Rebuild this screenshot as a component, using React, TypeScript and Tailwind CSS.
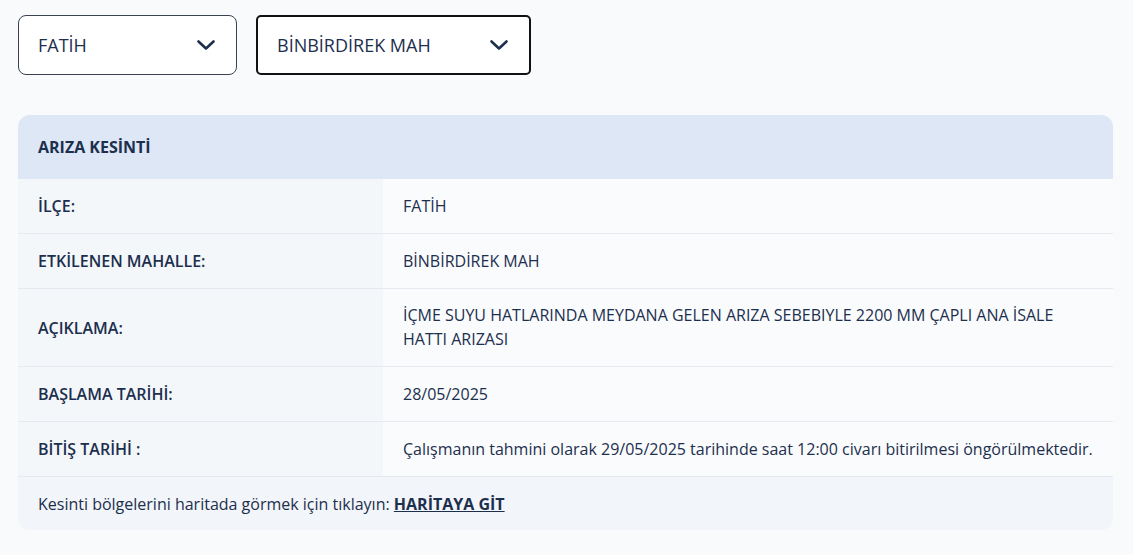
import React from "react";

interface Row {
    label: string;
    value: string;
}

const rows: Row[] = [
    { label: "İLÇE:", value: "FATİH" },
    { label: "ETKİLENEN MAHALLE:", value: "BİNBİRDİREK MAH" },
    {
        label: "AÇIKLAMA:",
        value: "İÇME SUYU HATLARINDA MEYDANA GELEN ARIZA SEBEBIYLE 2200 MM ÇAPLI ANA İSALE HATTI ARIZASI",
    },
    { label: "BAŞLAMA TARİHİ:", value: "28/05/2025" },
    {
        label: "BİTİŞ TARİHİ :",
        value: "Çalışmanın tahmini olarak 29/05/2025 tarihinde saat 12:00 civarı bitirilmesi öngörülmektedir.",
    },
];

function Chevron() {
    return (
        <svg className="w-[24px] h-[24px]" fill="none" stroke="currentColor" viewBox="0 0 24 24" aria-hidden="true">
            <path strokeLinecap="round" strokeLinejoin="round" strokeWidth="2.6" d="M4.5 8.5l7.5 7 7.5-7" />
        </svg>
    );
}

function Select({ value, width, focused }: { value: string; width: string; focused?: boolean }) {
    return (
        <div
            className={`${width} h-[60px] flex items-center justify-between bg-white pl-[19px] pr-[18px] ${focused ? "border-2 border-[#111] rounded-[5px]" : "border border-[#3a4252] rounded-lg"}`}
        >
            <span className="text-[18px] text-[#1c2f4d]">{value}</span>
            <span className="text-[#1c2f4d]">
                <Chevron />
            </span>
        </div>
    );
}

export default function App() {
    return (
        <div className="min-h-[555px] bg-[#f8fafc] px-[18px] pt-[15px] pb-[26px] font-['Open_Sans',sans-serif] text-[#1c2f4d]">
            <div className="flex gap-[19px]">
                <Select value="FATİH" width="w-[219px]" />
                <Select value="BİNBİRDİREK MAH" width="w-[275px]" focused />
            </div>

            <div className="mt-[40px] w-[1095px] rounded-xl overflow-hidden">
                <div className="h-[64px] bg-[#dde7f5] flex items-center px-5">
                    <h3 className="text-[16px] font-bold">ARIZA KESİNTİ</h3>
                </div>

                {rows.map((r) => (
                    <div key={r.label} className="flex border-b border-[#e6eaf0]">
                        <div className="w-[365px] shrink-0 bg-[#f4f7fa] px-5 flex items-center min-h-[54px] text-[16px] font-semibold">
                            {r.label}
                        </div>
                        <div className="flex-1 bg-[#fafbfd] px-5 pt-[14px] pb-[15px] flex items-center text-[16px] leading-[24px]">
                            {r.value}
                        </div>
                    </div>
                ))}

                <div className="h-[53px] bg-[#f2f5f9] flex items-center px-5 text-[16px] font-medium">
                    Kesinti bölgelerini haritada görmek için tıklayın:&nbsp;
                    <a href="#" className="font-bold underline">HARİTAYA GİT</a>
                </div>
            </div>
        </div>
    );
}
